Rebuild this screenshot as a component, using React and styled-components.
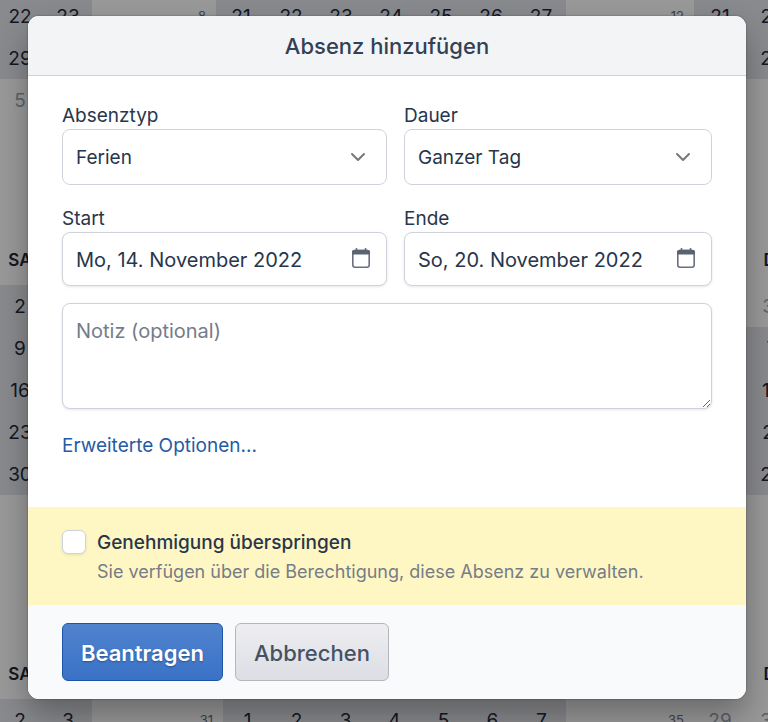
import React, { useState } from 'react';
import styled, { createGlobalStyle } from 'styled-components';
import { ChevronDown } from 'lucide-react';

const months = [
    {
        id: 'top',
        left: { rows: [['22', '23'], ['29', '30'], ['5', '6']], mutedFrom: 2 },
        middle: { week: '8', rows: [['21', '22', '23', '24', '25', '26', '27']], size: 50 },
        right: { week: '12', rows: [['21', '22'], ['28', '29'], ['', '']], mutedFrom: 2 },
    },
    {
        id: 'center',
        head: true,
        left: { rows: [['2', '3'], ['9', '10'], ['16', '17'], ['23', '24'], ['30', '31']] },
        middle: { week: '', rows: [], size: 50 },
        right: { week: '', rows: [['30', '31'], ['6', '7'], ['13', '14'], ['20', '21'], ['27', '28']], mutedTo: 1 },
    },
    {
        id: 'bottom',
        head: true,
        left: { rows: [['2', '3']] },
        middle: { week: '31', rows: [['1', '2', '3', '4', '5', '6', '7']], size: 49 },
        right: { week: '35', rows: [['29', '30']], mutedTo: 1 },
    },
];

const Month = ({ head, days, week, rows, size = 50, mutedFrom = 99, mutedTo = 0 }) => {
    return <MonthTable>
            {head && <thead>
                <tr>
                    {week !== undefined && <WeekCell as="th" />}
                    {days.map((day) => <DayName key={day} $size={size}>{day}</DayName>)}
                </tr>
            </thead>}
            <tbody>
                {rows.map((row, i) => (
                    <tr key={i}>
                        {week !== undefined && <WeekCell>{i === 0 ? week : ''}</WeekCell>}
                        {row.map((day, j) => (
                            <DayCell key={j} $size={size} $muted={i >= mutedFrom || i < mutedTo}>{day}</DayCell>
                        ))}
                    </tr>
                ))}
            </tbody>
        </MonthTable>
}

const YearCalendar = () => {
    return <Calendar aria-hidden="true">
            {months.map(({ id, head, left, middle, right }) => (
                <MonthRow key={id} $first={!head}>
                    <Month head={head} days={['SA', 'SO']} size={48} {...left} />
                    <Month head={head} days={['MO', 'DI', 'MI', 'DO', 'FR', 'SA', 'SO']} {...middle} />
                    <LastMonth>
                        <Month head={head} days={['MO', 'DI']} size={52} {...right} />
                    </LastMonth>
                </MonthRow>
            ))}
        </Calendar>
}

const CalendarIcon = () => (
    <svg width="20" height="22" viewBox="0 0 20 22" aria-hidden="true">
        <path d="M5.5 1v3M14.5 1v3" stroke="#6b7280" strokeWidth="1.6" />
        <rect x="1.8" y="3.6" width="16.4" height="16.6" rx="2.2" fill="none" stroke="#6b7080" strokeWidth="1.6" />
        <path d="M1 7.4V5.2C1 3.6 2.3 2.8 4 2.8h12c1.7 0 3 .8 3 2.4v2.2z" fill="#5b6271" />
    </svg>
)

const SelectField = ({ id, label, options }) => {
    return <Field>
            <Label htmlFor={id}>{label}</Label>
            <ControlWrapper>
                <Select id={id}>
                    {options.map((option) => <option key={option}>{option}</option>)}
                </Select>
                <SelectArrow><ChevronDown size={24} strokeWidth={2} /></SelectArrow>
            </ControlWrapper>
        </Field>
}

const DateField = ({ id, label, initial }) => {
    const [value, setValue] = useState(initial);

    return <Field>
            <Label htmlFor={id}>{label}</Label>
            <ControlWrapper>
                <DateInput id={id} type="text" value={value} onChange={(e) => setValue(e.target.value)} />
                <DateButton type="button" aria-label={label}><CalendarIcon /></DateButton>
            </ControlWrapper>
        </Field>
}

function App() {
    const [skipApproval, setSkipApproval] = useState(false);

    return (
        <Page>
            <GlobalStyle />
            <YearCalendar />
            <Overlay>
                <Modal role="dialog" aria-labelledby="modal-title" onSubmit={(e) => e.preventDefault()}>
                    <ModalHeader>
                        <ModalTitle id="modal-title">Absenz hinzufügen</ModalTitle>
                    </ModalHeader>
                    <ModalBody>
                        <FieldGrid>
                            <SelectField id="type" label="Absenztyp" options={['Ferien', 'Krankheit']} />
                            <SelectField id="duration" label="Dauer" options={['Ganzer Tag', 'Halber Tag']} />
                            <DateField id="start" label="Start" initial="Mo, 14. November 2022" />
                            <DateField id="end" label="Ende" initial="So, 20. November 2022" />
                        </FieldGrid>
                        <Note aria-label="Notiz (optional)" placeholder="Notiz (optional)" />
                        <MoreLink href="#optionen">Erweiterte Optionen...</MoreLink>
                    </ModalBody>
                    <Approval>
                        <Checkbox
                            id="skip"
                            type="checkbox"
                            checked={skipApproval}
                            onChange={(e) => setSkipApproval(e.target.checked)}
                        />
                        <div>
                            <ApprovalLabel htmlFor="skip">Genehmigung überspringen</ApprovalLabel>
                            <ApprovalHint>Sie verfügen über die Berechtigung, diese Absenz zu verwalten.</ApprovalHint>
                        </div>
                    </Approval>
                    <ModalFooter>
                        <PrimaryButton type="submit">Beantragen</PrimaryButton>
                        <SecondaryButton type="button">Abbrechen</SecondaryButton>
                    </ModalFooter>
                </Modal>
            </Overlay>
        </Page>
    );
}

const GlobalStyle = createGlobalStyle`
    * {
        box-sizing: border-box;
    }

    body {
        margin: 0;
        background: #fff;
        color: #27364b;
        font-family: Inter, "Liberation Sans", sans-serif;
        font-size: 19px;
    }

    button, input, select, textarea {
        font: inherit;
        color: inherit;
    }
`;

const Page = styled.div`
    position: relative;
    height: 100vh;
    overflow: hidden;
`;

const Calendar = styled.div`
    margin-left: -4px;
    color: #1e293b;
`;

const MonthRow = styled.div`
    display: grid;
    grid-template-columns: 96px minmax(0, 1fr) 202px;
    height: ${props => props.$first ? '235px' : '414px'};
    margin-top: ${props => props.$first ? '-5px' : '0'};
    align-items: start;

    > :nth-child(2) {
        justify-self: end;
    }
`;

const LastMonth = styled.div`
    display: flex;
    justify-content: flex-end;
    margin-right: -30px;
`;

const MonthTable = styled.table`
    border-collapse: collapse;
`;

const DayName = styled.th`
    min-width: ${props => props.$size}px;
    height: 55px;
    padding: 4px 0 0;
    font-size: 17px;
    font-weight: 600;
`;

const DayCell = styled.td`
    min-width: ${props => props.$size}px;
    width: ${props => props.$size}px;
    height: 42px;
    padding: 0;
    text-align: center;
    color: ${props => props.$muted ? '#9ca3af' : 'inherit'};
    background: ${props => props.$muted ? 'transparent' : '#e5e7eb'};
`;

const WeekCell = styled.td`
    width: 40px;
    padding: 0 10px 0 0;
    font-size: 13px;
    font-weight: 400;
    text-align: right;
    color: #6b7280;
`;

const Overlay = styled.div`
    position: absolute;
    inset: 0;
    padding: 16px 22px 0 28px;
    background: rgba(0, 0, 0, 0.4);
`;

const Modal = styled.form`
    overflow: hidden;
    border-radius: 11px;
    background: #fff;
    box-shadow: 0 0 2px rgba(0, 0, 0, 0.4), 0 16px 32px rgba(0, 0, 0, 0.3);
`;

const ModalHeader = styled.header`
    display: flex;
    align-items: center;
    justify-content: center;
    height: 60px;
    background: #f3f4f6;
    border-bottom: 1px solid #ced3db;
`;

const ModalTitle = styled.h1`
    margin: 0;
    font-size: 22px;
    font-weight: 500;
    color: #334155;
`;

const ModalBody = styled.div`
    padding: 25px 34px 46px;
`;

const FieldGrid = styled.div`
    display: grid;
    grid-template-columns: 325fr 308fr;
    gap: 19px 17px;
    margin-bottom: 17px;
`;

const Field = styled.div`
    display: flex;
    flex-direction: column;
    min-width: 0;
`;

const Label = styled.label`
    padding-top: 2px;
    line-height: 26px;
`;

const ControlWrapper = styled.div`
    position: relative;
    display: flex;
`;

const Select = styled.select`
    appearance: none;
    width: 100%;
    height: 56px;
    padding: 0 44px 0 13px;
    border: 1px solid #ced3db;
    border-radius: 8px;
    background: #fff;
`;

const DateInput = styled.input`
    width: 100%;
    height: 54px;
    padding: 2px 44px 0 13px;
    border: 1px solid #ced3db;
    border-radius: 8px;
    background: #fff;
    font-size: 20px;
    box-shadow: 0 1px 3px rgba(0, 0, 0, 0.1);
`;

const SelectArrow = styled.span`
    position: absolute;
    top: 0;
    bottom: 0;
    right: 17px;
    display: flex;
    align-items: center;
    color: #777;
    pointer-events: none;
`;

const DateButton = styled.button`
    position: absolute;
    top: 2px;
    bottom: 4px;
    right: 16px;
    display: flex;
    align-items: center;
    padding: 0;
    border: 0;
    background: none;
`;

const Note = styled.textarea`
    display: block;
    width: 100%;
    height: 106px;
    padding: 13px;
    border: 1px solid #ced3db;
    border-radius: 8px;
    font-size: 20px;
    line-height: 28px;
    resize: vertical;
    box-shadow: 0 1px 3px rgba(0, 0, 0, 0.1);

    &::placeholder {
        color: #767c88;
    }
`;

const MoreLink = styled.a`
    display: inline-block;
    margin-top: 22px;
    line-height: 30px;
    color: #255ba5;
    text-decoration: none;
`;

const Approval = styled.div`
    display: flex;
    gap: 11px;
    padding: 21px 34px 19px;
    background: #fef7c3;
    line-height: 29px;
`;

const Checkbox = styled.input`
    appearance: none;
    flex: none;
    width: 24px;
    height: 24px;
    margin: 2px 0 0;
    border: 1px solid #ced3db;
    border-radius: 6px;
    background: ${props => props.checked ? '#3c73c8' : '#fff'};
    box-shadow: 0 1px 3px rgba(0, 0, 0, 0.1);
`;

const ApprovalLabel = styled.label`
    display: block;
    font-weight: 500;
`;

const ApprovalHint = styled.div`
    font-size: 18px;
    color: #767c88;
`;

const ModalFooter = styled.footer`
    display: flex;
    gap: 12px;
    padding: 18px 34px;
    background: #f9fafc;
`;

const Button = styled.button`
    height: 58px;
    padding: 2px 18px 0;
    border-radius: 6px;
    font-size: 22px;
    font-weight: 500;
`;

const PrimaryButton = styled(Button)`
    border: 1px solid #1c55a8;
    background: linear-gradient(#5083ce, #3a72c7);
    color: #fff;
    font-weight: 600;
    text-shadow: 0 1px 2px rgba(0, 0, 0, 0.3);
`;

const SecondaryButton = styled(Button)`
    border: 1px solid #b4b6ba;
    background: linear-gradient(#eeeef1, #dcdee5);
    color: #465264;
`;

export default App
